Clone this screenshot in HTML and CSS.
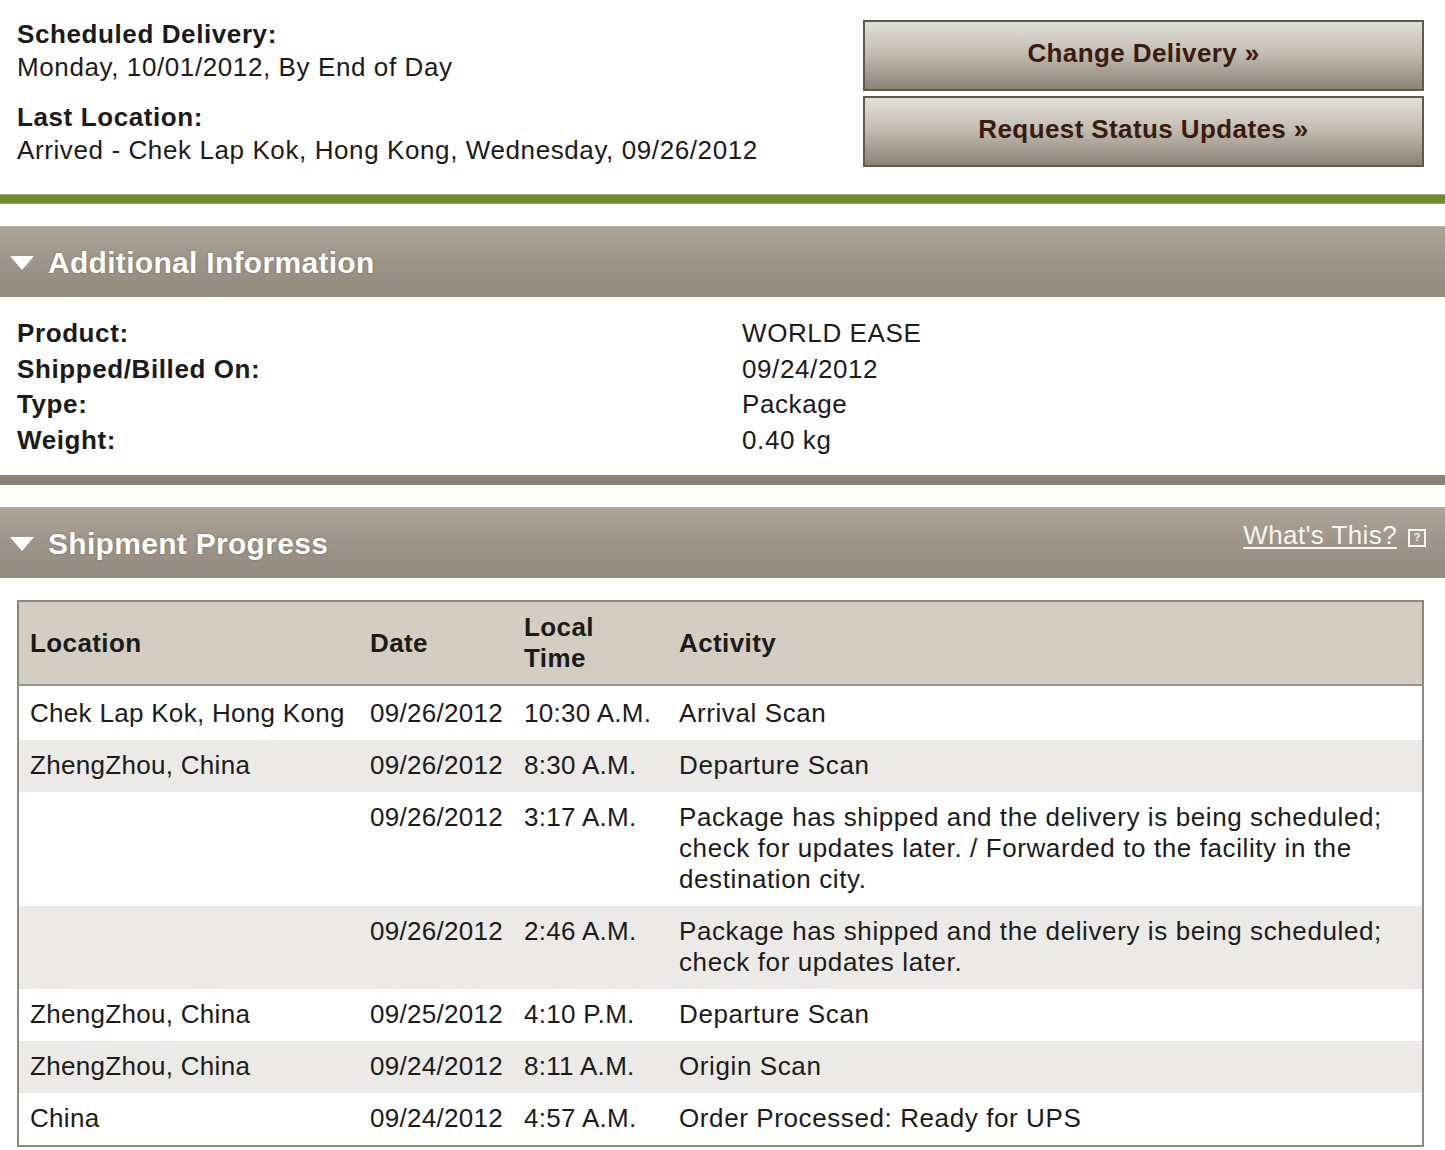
FILE: index.html
```html
<!DOCTYPE html>
<html lang="en">
<head>
<meta charset="utf-8">
<title>Shipment Tracking</title>
<link rel="stylesheet" href="styles.css">
</head>
<body>
<div class="page">
  <div class="summary">
    <div class="status">
      <div class="group">
        <div class="label">Scheduled Delivery:</div>
        <div>Monday, 10/01/2012, By End of Day</div>
      </div>
      <div class="group">
        <div class="label">Last Location:</div>
        <div>Arrived - Chek Lap Kok, Hong Kong, Wednesday, 09/26/2012</div>
      </div>
    </div>
    <div class="actions">
      <a class="btn" href="#">Change Delivery »</a>
      <a class="btn" href="#">Request Status Updates »</a>
    </div>
  </div>

  <div class="rule rule-green"></div>

  <div class="section-head">
    <div class="title"><span class="tri"></span>Additional Information</div>
  </div>

  <div class="info">
    <div class="label">Product:</div><div>WORLD EASE</div>
    <div class="label">Shipped/Billed On:</div><div>09/24/2012</div>
    <div class="label">Type:</div><div>Package</div>
    <div class="label">Weight:</div><div>0.40 kg</div>
  </div>

  <div class="rule rule-gray"></div>

  <div class="section-head">
    <div class="title"><span class="tri"></span>Shipment Progress</div>
    <div class="help"><a href="#">What's This?</a><span class="help-icon">?</span></div>
  </div>

  <div class="table-wrap">
    <table class="progress">
      <colgroup>
        <col class="c-loc"><col class="c-date"><col class="c-time"><col>
      </colgroup>
      <thead>
        <tr><th>Location</th><th>Date</th><th>Local<br>Time</th><th>Activity</th></tr>
      </thead>
      <tbody>
        <tr><td>Chek Lap Kok, Hong Kong</td><td>09/26/2012</td><td>10:30 A.M.</td><td>Arrival Scan</td></tr>
        <tr class="alt"><td>ZhengZhou, China</td><td>09/26/2012</td><td>8:30 A.M.</td><td>Departure Scan</td></tr>
        <tr><td></td><td>09/26/2012</td><td>3:17 A.M.</td><td>Package has shipped and the delivery is being scheduled; check for updates later. / Forwarded to the facility in the destination city.</td></tr>
        <tr class="alt"><td></td><td>09/26/2012</td><td>2:46 A.M.</td><td>Package has shipped and the delivery is being scheduled; check for updates later.</td></tr>
        <tr><td>ZhengZhou, China</td><td>09/25/2012</td><td>4:10 P.M.</td><td>Departure Scan</td></tr>
        <tr class="alt"><td>ZhengZhou, China</td><td>09/24/2012</td><td>8:11 A.M.</td><td>Origin Scan</td></tr>
        <tr><td>China</td><td>09/24/2012</td><td>4:57 A.M.</td><td>Order Processed: Ready for UPS</td></tr>
      </tbody>
    </table>
  </div>
</div>
</body>
</html>
```
FILE: styles.css
```css
* { box-sizing: border-box; }

body {
  margin: 0;
  background: #ffffff;
  color: #1b1b1b;
  font-family: "Liberation Sans", Arial, sans-serif;
  font-size: 26px;
  letter-spacing: 0.6px;
  line-height: 33px;
}

.page {
  width: 1445px;
}

/* ---------- summary ---------- */
.summary {
  display: flex;
  justify-content: space-between;
  align-items: flex-start;
  padding: 18px 21px 0 17px;
}

.status {
  display: flex;
  flex-direction: column;
  gap: 17px;
}

.label {
  font-weight: bold;
}

.actions {
  display: flex;
  flex-direction: column;
  gap: 5px;
  width: 561px;
  margin-top: 2px;
}

.btn {
  display: flex;
  align-items: center;
  justify-content: center;
  height: 71px;
  border: 2px solid #5f5a50;
  background: linear-gradient(#e3dfd7 0%, #c4beb3 45%, #8a8376 100%);
  color: #3a1b10;
  font-weight: bold;
  font-size: 26px;
  letter-spacing: 0.4px;
  text-decoration: none;
  padding-bottom: 4px;
}

/* ---------- rules ---------- */
.rule {
  height: 10px;
}
.rule-green {
  margin-top: 27px;
  background: #6f8a35;
  border-top: 1px solid #9fb06e;
  border-bottom: 1px solid #9fb06e;
}
.rule-gray {
  background: #8b8375;
}

/* ---------- section headers ---------- */
.section-head {
  display: flex;
  justify-content: space-between;
  height: 71px;
  margin-top: 22px;
  padding: 0 19px 0 10px;
  background: linear-gradient(#aba497 0%, #9d9589 50%, #928a7d 100%);
  border-top: 1px solid #b3ada2;
}

.title {
  display: flex;
  align-items: center;
  gap: 14px;
  color: #ffffff;
  font-weight: bold;
  font-size: 30px;
  letter-spacing: 0.3px;
  text-shadow: 0 0 2px rgba(70, 60, 50, 0.55);
}

.tri {
  width: 0;
  height: 0;
  border-left: 12.5px solid transparent;
  border-right: 12.5px solid transparent;
  border-top: 14px solid #ffffff;
  margin-top: 2px;
}

.help {
  display: flex;
  align-items: center;
  gap: 11px;
  height: 31px;
  margin-top: 12px;
}

.help a {
  color: #f7f5f0;
  font-size: 26px;
  letter-spacing: 0.4px;
  text-decoration: underline;
  text-underline-offset: 3px;
  text-decoration-thickness: 2px;
}

.help-icon {
  display: flex;
  align-items: center;
  justify-content: center;
  width: 18px;
  height: 18px;
  border: 2px solid #f7f5f0;
  color: #f7f5f0;
  font-size: 11px;
  font-weight: bold;
  line-height: 1;
  letter-spacing: 0;
  margin-top: 4px;
}

/* ---------- info ---------- */
.info {
  display: grid;
  grid-template-columns: 725px 1fr;
  padding: 19px 17px 17px 17px;
  line-height: 35.5px;
}

/* ---------- table ---------- */
.table-wrap {
  padding: 22px 21px 0 17px;
}

.progress {
  width: 100%;
  table-layout: fixed;
  border-collapse: collapse;
  border: 2px solid #8d887c;
  line-height: 31px;
}

.c-loc { width: 341px; }
.c-date { width: 154px; }
.c-time { width: 155px; }

.progress th {
  background: #d4cdc1;
  text-align: left;
  vertical-align: middle;
  font-weight: bold;
  letter-spacing: 0.4px;
  padding: 10px 11px;
  border-bottom: 2px solid #9c968a;
}

.progress td {
  vertical-align: top;
  padding: 10px 11px 11px 11px;
}

.progress td:nth-child(-n+3) {
  white-space: nowrap;
  letter-spacing: 0.3px;
}

.progress tbody tr:first-child td {
  padding-top: 12px;
}

.progress tr.alt td {
  background: #ebeae6;
}
```
